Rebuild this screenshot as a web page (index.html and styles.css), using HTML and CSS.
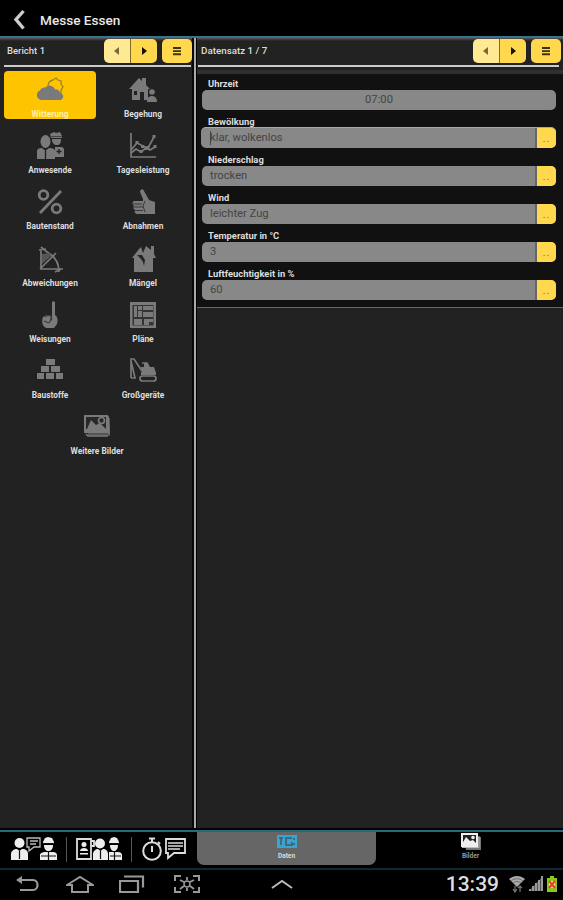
FILE: index.html
```html
<!DOCTYPE html>
<html lang="de">
<head>
    <meta charset="UTF-8">
    <meta name="viewport" content="width=device-width, initial-scale=1.0">
    <title>Messe Essen</title>
    <link rel="stylesheet" href="styles.css">
</head>
<body>
    <header class="topbar">
        <svg class="back" viewBox="0 0 14 22"><path d="M11.500 2 L4 10.500 L11.500 19.500" fill="none" stroke="#ccc" stroke-width="3.400"/></svg>
        <h1>Messe Essen</h1>
    </header>

    <main class="content">
        <!-- Menü links -->
        <section class="sidebar">
            <div class="panel-head">
                <span class="head-title report">Bericht 1</span>
                <div class="pager">
                    <button class="prev"><svg viewBox="0 0 8 10"><path d="M6 1v8L1 5z"/></svg></button>
                    <button class="next"><svg viewBox="0 0 8 10"><path d="M2 1v8l5-4z"/></svg></button>
                </div>
                <button class="menu"><svg viewBox="0 0 10 10"><path d="M1 1h8v2H1zM1 4.200h8v1.800H1zM1 7.200h8v2H1z"/></svg></button>
            </div>
            <nav class="tiles">
                <a class="tile active">
                    <svg viewBox="0 0 28 28"><path d="M12 10a6.500 6.500 0 0 1 5-6l3-2 2 2 3 1 0 3 2 3-2 3v3" fill="none" stroke="#9c8226" stroke-width="1.300"/><path class="f" d="M5 24a5 5 0 0 1-1-9.500 5 5 0 0 1 5-3 6 6 0 0 1 10 2 4 4 0 0 1 5 3 4 4 0 0 1 1 7.500z"/></svg>
                    <span>Witterung</span>
                </a>
                <a class="tile">
                    <svg viewBox="0 0 28 28"><path class="f" fill-rule="evenodd" d="M0 13 10 2l3 3V2h4v7l4 4h-2v11h-4v-8h-4v8H3V13zM5 15v4h3v-4z"/><circle class="f" cx="23" cy="16" r="2.800"/><path class="f" d="M18 26c0-4 2-6 5-6s5 2 5 6z"/></svg>
                    <span>Begehung</span>
                </a>
                <a class="tile">
                    <svg viewBox="0 0 28 28"><path class="f" d="M14 2l4-2 2 1 4-1 2 4v2H15zM16 7h9c0 4-1 6-4 6s-5-2-5-6M19 15h6c2 0 3 1 3 3v7h-9z"/><ellipse class="f" cx="9.500" cy="9.500" rx="5" ry="6.500"/><path class="f" d="M1 27v-8c0-2 2-3 5-3l3.500 3 3.500-3c4 0 6 1 6 3v8z"/><path d="M9.500 19v8M23 17v5M20.500 19.500h5" stroke="#202020" stroke-width="1.300"/><path d="M15 4.500h11" stroke="#444"/></svg>
                    <span>Anwesende</span>
                </a>
                <a class="tile">
                    <svg viewBox="0 0 28 28"><path class="s" d="M2 1v24h25M2 18l6-7 6 3 5 2 6-11M2 21l5-4 5 3 5-4 4 2 5-3"/><path class="f" d="M6.500 9h3v3h-3zM12 13h3v3h-3zM17.500 14h3v3h-3zM23.500 3h3v3h-3zM10.500 18h3v3h-3zM15.500 15h3v3h-3zM24.500 13h3v3h-3z"/></svg>
                    <span>Tagesleistung</span>
                </a>
                <a class="tile">
                    <svg viewBox="0 0 28 28"><path class="s thick" d="M4 25 25 3"/><circle class="s thick" cx="7.500" cy="7" r="4.300"/><circle class="s thick" cx="20.500" cy="20.500" r="4.300"/></svg>
                    <span>Bautenstand</span>
                </a>
                <a class="tile">
                    <svg viewBox="0 0 28 28"><path class="f" d="M14 11 11 4c0-3 3-4 4-1l5 9 6 2v12H9c-3 0-4-2-3-4-2-1-2-3-1-4-2-2-2-5 1-5h8z"/><path d="M4 16h9M5 19h9M6 22.500h8M16 13l-2 5 2 6" stroke="#282828" stroke-width=".8" fill="none"/></svg>
                    <span>Abnahmen</span>
                </a>
                <a class="tile">
                    <svg viewBox="0 0 28 28"><path class="s" d="M5 5v19h22M4 24 20 8M5 2l6 5c8 4 12 10 12 20M3 5l7-1M19 27l6-3"/><path d="M6 9l8-1 1 3-9 8z" fill="#555"/></svg>
                    <span>Abweichungen</span>
                </a>
                <a class="tile">
                    <svg viewBox="0 0 28 28"><path class="f" d="M3 13 10 4l2-2 2 6 3-7 5 4V1h3v8l2 4h-3v14H5V13z"/><path d="M8 10l4 4 2 3 1 4 1-6-3-5" fill="#242424"/></svg>
                    <span>Mängel</span>
                </a>
                <a class="tile">
                    <svg viewBox="0 0 28 28"><path class="f" d="M16 1c1-1 3-1 3 1v12c3 2 3 6 2 9l-3 4h-8c-5-3-4-8-3-11l4-2 5 1z"/><path d="M9 16l4-2 3 4-3 4-5-2M16 15l-2 5" stroke="#333" stroke-width="1" fill="none"/></svg>
                    <span>Weisungen</span>
                </a>
                <a class="tile">
                    <svg viewBox="0 0 28 28"><path class="f" d="M1 1h26v26H1z"/><path d="M3.500 4h21v20.500h-21z" fill="#333"/><path class="f" d="M5 5h3v11H5zM9 5h4v4H9zM9 10h4v6H9zM14 5h10v4H14zM14 11h10v5H14zM5 18h8v6H5zM15 18h9v3h-4v3h-5z"/></svg>
                    <span>Pläne</span>
                </a>
                <a class="tile">
                    <svg viewBox="0 0 28 28"><path class="f" d="M10 2h9v6h-9zM5 9h8v6H5zM15 9h9v6h-9zM1 16h7v6H1zM10 16h8v6h-8zM20 16h7v6h-7z"/></svg>
                    <span>Baustoffe</span>
                </a>
                <a class="tile">
                    <svg viewBox="0 0 28 28"><path class="s" d="M2 21V2h3l8 12M2 4l4 17H2M13 6h5l3 6"/><path class="f" d="M12 10h3V6h4v4h6l2 6H13z"/><rect class="s" x="11" y="19" width="16" height="5" rx="2.500"/><path class="f" d="M12 15h15v3H12z"/></svg>
                    <span>Großgeräte</span>
                </a>
                <a class="tile wide">
                    <svg viewBox="0 0 28 28"><path d="M5 5h22v18H5z" fill="#555"/><path class="f" d="M1 2h24v18H1z"/><path d="M3 4h20v12H3z" fill="#282828"/><path class="f" d="M4 16l4-9 5 5 4-2 6 6z"/><circle class="s" cx="18.500" cy="7.500" r="3"/><path class="s" d="M3 21l2 2h20M25 3l1 18"/></svg>
                    <span>Weitere Bilder</span>
                </a>
            </nav>
        </section>

        <!-- Datensatz rechts -->
        <section class="detail">
            <div class="panel-head">
                <span class="head-title">Datensatz 1 / 7</span>
                <div class="pager">
                    <button class="prev"><svg viewBox="0 0 8 10"><path d="M6 1v8L1 5z"/></svg></button>
                    <button class="next"><svg viewBox="0 0 8 10"><path d="M2 1v8l5-4z"/></svg></button>
                </div>
                <button class="menu"><svg viewBox="0 0 10 10"><path d="M1 1h8v2H1zM1 4.200h8v1.800H1zM1 7.200h8v2H1z"/></svg></button>
            </div>
            <form class="form">
                <div class="row">
                    <label>Uhrzeit</label>
                    <div class="field"><div class="value center">07:00</div></div>
                </div>
                <div class="row">
                    <label>Bewölkung</label>
                    <div class="field focus"><div class="value">klar, wolkenlos</div><div class="more">..</div></div>
                </div>
                <div class="row">
                    <label>Niederschlag</label>
                    <div class="field"><div class="value">trocken</div><div class="more">..</div></div>
                </div>
                <div class="row">
                    <label>Wind</label>
                    <div class="field"><div class="value">leichter Zug</div><div class="more">..</div></div>
                </div>
                <div class="row">
                    <label>Temperatur in °C</label>
                    <div class="field"><div class="value">3</div><div class="more">..</div></div>
                </div>
                <div class="row">
                    <label>Luftfeuchtigkeit in %</label>
                    <div class="field"><div class="value">60</div><div class="more">..</div></div>
                </div>
            </form>
        </section>
    </main>

    <footer class="tabs">
        <div class="actions">
            <svg class="a1" viewBox="0 0 46 24"><g fill="#eee"><circle cx="8.500" cy="6" r="5"/><path d="M0 23v-6c0-3 3-5 6-5l2.500 2 2.500-2c4 0 6 2 6 5v6z"/><path d="M32 5l2-4 3-1 4 1 2 4v2H32zM33 8h9c0 4-2 6-4.500 6S33 12 33 8M29 23v-5c0-2 3-3 5-3h8c2 0 4 1 4 3v5z"/></g><path d="M16 1h13v9h-6l-5 4v-4h-2zM19 4h8M19 7h6" fill="none" stroke="#bbb" stroke-width="1.300"/><path d="M8.500 14v8M37.500 15v8M30 19h15M32 6.500h11" stroke="#111" stroke-width="1.200"/></svg>
            <i></i>
            <svg class="a2" viewBox="0 0 46 24"><path d="M1 2h14v20H1zM15 4h3v5h-3" fill="none" stroke="#ddd" stroke-width="1.800"/><g fill="#eee"><circle cx="8" cy="7.500" r="2.500"/><path d="M4 14c0-4 8-4 8 0zM4 16h8v1.500H4z"/><circle cx="24" cy="6.500" r="5"/><path d="M17 23v-6c0-3 3-5 5-5l2.500 2 2.500-2c3 0 5 2 5 5v6zM33 5l2-4 3-1 3 1 2 4v2H33zM34 8h8c0 4-2 6-4 6s-4-2-4-6M33 23v-8h9c2 0 4 1 4 3v5z"/></g><path d="M24.500 14v8M38.500 15v8M34 19h11M33 6.500h10" stroke="#111" stroke-width="1.200"/></svg>
            <i></i>
            <svg class="a3" viewBox="0 0 44 24"><g fill="none" stroke="#ddd"><circle cx="10" cy="14" r="8.800" stroke-width="2"/><path d="M7 1.500h6M10 2v4M16 5l2 2M10 15V9" stroke-width="2"/><path d="M24 2h19v14H32l-6 5v-5h-2z" stroke-width="1.800"/><path d="M26 6h15M26 9h15M26 12h12" stroke-width="1.500"/></g></svg>
        </div>
        <div class="tab selected">
            <svg viewBox="0 0 20 13"><path d="M0 0h20v13H0z" fill="#38a5d0"/><path d="M2 3h4M4 3v7M15 3H9v7h6V7M17 3v2M17 8v2" fill="none" stroke="#456" stroke-width="1.500"/></svg>
            <span>Daten</span>
        </div>
        <div class="tab">
            <svg class="pics" viewBox="0 0 20 18"><path d="M3 4h17v13H5z" fill="#777"/><path d="M0 0h17v14H0z" fill="#eee"/><path d="M2 2h13v8H2z" fill="#222"/><path d="M1 11l4-7 4 4 3-1 4 4z" fill="#eee"/><circle cx="12" cy="4.500" r="1.800" fill="#eee"/><path d="M1 14.500h17V3" fill="none" stroke="#bbb"/></svg>
            <span>Bilder</span>
        </div>
    </footer>

    <div class="sysbar">
        <svg class="nav-back" viewBox="0 0 24 18"><path d="M2 5h15c6 0 6 10 0 10H4" fill="none" stroke="#999" stroke-width="2.200"/><path d="M0 5l6-4v8z" fill="#999"/></svg>
        <svg class="nav-home" viewBox="0 0 28 18"><path d="M1 10 14 2l13 8h-5v7H6v-7z" fill="none" stroke="#999" stroke-width="2"/></svg>
        <svg class="nav-recent" viewBox="0 0 26 18"><path d="M1 6h18v11H1zM5 1.500h19v11" fill="none" stroke="#999" stroke-width="2.200"/></svg>
        <svg class="nav-shot" viewBox="0 0 26 18"><path d="M1 6V1h6M19 1h6v5M25 12v5h-6M7 17H1v-5" fill="none" stroke="#999" stroke-width="2"/><path d="M6 5l4 2M20 5l-4 2M6 14l4-3M20 14l-4-3M13 2v3M13 13v3" stroke="#999" stroke-width="1.800"/><circle cx="13" cy="9" r="3" fill="none" stroke="#999" stroke-width="1.500"/></svg>
        <svg class="nav-up" viewBox="0 0 22 10"><path d="M1 9 11 2l10 7" fill="none" stroke="#bbb" stroke-width="2"/></svg>
        <span class="clock">13:39</span>
        <svg class="wifi" viewBox="0 0 16 18"><path d="M0 4c5-4 11-4 16 0l-8 8z" fill="#aaa"/><path d="M2 6c4-3 8-3 12 0M4 8c3-2 5-2 8 0" fill="none" stroke="#555" stroke-width=".7"/><path d="M6 11v6M4 14l2 3 2-3M11 17v-6M9 13l2-2 2 2" fill="none" stroke="#777" stroke-width="1.200"/></svg>
        <svg class="signal" viewBox="0 0 14 16"><path d="M0 15 14 0v15z" fill="#555"/><path d="M0 15v-2h2v2zM3 15v-5h2v5zM6 15V7h2v8zM9 15V4h2v11zM12 15V0h2v15z" fill="#999"/></svg>
        <svg class="battery" viewBox="0 0 10 16"><path d="M3 0h4v2h3v14H0V2h3z" fill="#8cc621"/><path d="M2 5h6v7H2z" fill="#ffd9a0"/><path d="M2 5l6 7M8 5l-6 7" stroke="#e5401c" stroke-width="2"/></svg>
    </div>
</body>
</html>
```
FILE: styles.css
```css
* {
    box-sizing: border-box;
}
body {
    margin: 0;
    height: 900px;
    background-color: #000;
    color: #fff;
    font-family: Roboto, sans-serif;
    display: flex;
    flex-direction: column;
    overflow: hidden;
}
svg {
    display: block;
    flex: none;
}
.topbar {
    height: 38px;
    flex: none;
    display: flex;
    align-items: center;
    border-bottom: 2px solid #38728b;
    padding: 3px 0 0 12px;
}
.back {
    width: 14px;
    height: 22px;
}
h1 {
    margin: 1px 0 0 14px;
    font-size: 13.6px;
    font-weight: 500;
    color: #e8e8e8;
}
.content {
    height: 790px;
    flex: none;
    display: flex;
    background: linear-gradient(#555, #222 3px);
}
.sidebar {
    width: 196px;
    padding-right: 3px;
    border-right: 2px solid #aaa;
    box-shadow: inset -2px 0 #080808;
}
.detail {
    flex: 1;
    border-left: 1px solid #000;
}

/* Kopfzeile mit Blättern und Menü */
.panel-head {
    height: 29px;
    padding: 1px 0 3px 3px;
    display: flex;
    align-items: center;
    border-bottom: 2px solid #ccc;
}
.sidebar .panel-head {
    margin: 0 0 0 4px;
}
.detail .panel-head {
    margin: 0 4px 0 1px;
}
.head-title {
    flex: 1;
    font-size: 9.8px;
    font-weight: 500;
    color: #ddd;
}
.report {
    font-size: 9.5px;
}
.pager {
    display: flex;
    margin-right: 5px;
}
.menu {
    margin-right: -1px;
}
.detail .menu {
    margin-right: -2px;
}
button {
    border: 0;
    padding: 0;
    height: 24px;
    background-color: #ffd84e;
    display: flex;
    align-items: center;
    justify-content: center;
}
button svg {
    width: 8px;
    height: 10px;
    fill: #181000;
}
.prev {
    width: 27px;
    border-radius: 5px 0 0 5px;
    border-right: 1px solid #806c27;
    background-color: #ffe992;
}
.prev svg {
    fill: #78693b;
}
.next {
    width: 26px;
    border-radius: 0 5px 5px 0;
}
.menu {
    width: 30px;
    border-radius: 5px;
}
.menu svg {
    width: 10px;
    fill: #40350c;
}

/* Kacheln */
.tiles {
    display: grid;
    grid-template-columns: 92px 94px;
    grid-auto-rows: 56.2px;
    padding: 4px 0 0 4px;
}
.tile {
    height: 48px;
    padding-top: 5px;
    display: flex;
    flex-direction: column;
    align-items: center;
    border-radius: 4px;
}
.tile.active {
    background-color: #ffc400;
}
.tile svg {
    width: 28px;
    height: 28px;
}
.tile span {
    margin-top: 5px;
    font-size: 8.4px;
    line-height: 10px;
    font-weight: 700;
    color: #ddd;
    white-space: nowrap;
}
.tile.active span {
    color: #fff0a8;
}
.wide {
    grid-column: 1 / 3;
}
.f {
    fill: #7a7a7a;
}
.s {
    fill: none;
    stroke: #7a7a7a;
    stroke-width: 1.7;
}
.thick {
    stroke-width: 2.8;
}

/* Formular */
.form {
    margin-top: 3px;
    padding: 4px 7px 0 5px;
    height: 238px;
    background-color: #111;
    border-top: 4px solid #303030;
    border-bottom: 1px solid #666;
}
.row {
    height: 38px;
}
label {
    display: block;
    height: 12px;
    padding-left: 6px;
    font-size: 9.4px;
    line-height: 11px;
    font-weight: 700;
    color: #ddd;
}
.field {
    display: flex;
    height: 20px;
    border-radius: 5px;
    overflow: hidden;
    background-color: #888;
    color: #444;
}
.focus {
    height: 21px;
    margin-top: -1px;
    margin-left: -1px;
    border-top: 1px solid #aaa;
}
.value {
    flex: 1;
    padding-left: 8px;
    font-size: 11.2px;
    line-height: 20px;
}
.focus .value {
    padding-left: 0;
    margin-left: 9px;
    background: linear-gradient(#444, #444) 0 3px / 1px 14px no-repeat;
}
.center {
    padding: 0;
    text-align: center;
}
.more {
    width: 21px;
    background-color: #ffd84e;
    border-left: 2px solid #666;
    color: #86691a;
    font-size: 10px;
    line-height: 21px;
    text-align: center;
    letter-spacing: 1px;
}

/* Untere Leiste */
.tabs {
    height: 40px;
    flex: none;
    margin-top: 2px;
    display: flex;
    border-top: 2px solid #29697f;
    border-bottom: 2px solid #0c2931;
}
.actions {
    width: 197px;
    display: flex;
    align-items: center;
    padding: 0 0 2px 11px;
}
.actions i {
    width: 1px;
    height: 25px;
    margin: 0 9px;
    background-color: #555;
}
.a1, .a2 {
    width: 46px;
    height: 24px;
}
.a3 {
    width: 44px;
    height: 24px;
    margin-left: 1px;
}
.tab {
    flex: 1;
    display: flex;
    flex-direction: column;
    align-items: center;
    padding: 1px 0 0 2px;
}
.selected {
    flex: none;
    width: 179px;
    height: 33px;
    padding: 3px 0 0;
    border-radius: 0 0 7px 7px;
    background-color: #666;
}
.tab svg {
    width: 20px;
    height: 13px;
}
.tab .pics {
    height: 18px;
}
.tab span {
    font-size: 6.5px;
    line-height: 8px;
    font-weight: 700;
    margin-top: 4px;
    color: #ddd;
}
.tab .pics + span {
    margin-top: 1px;
    color: #999;
}

/* Systemleiste */
.sysbar {
    flex: 1;
    display: flex;
    align-items: center;
    padding: 0 6px 2px 16px;
}
.nav-back {
    width: 24px;
    height: 18px;
}
.nav-home {
    width: 28px;
    height: 18px;
    margin-left: 26px;
}
.nav-recent {
    width: 26px;
    height: 18px;
    margin-left: 25px;
}
.nav-shot {
    width: 26px;
    height: 18px;
    margin-left: 29px;
}
.nav-up {
    width: 22px;
    height: 10px;
    margin-left: 71px;
}
.clock {
    flex: 1;
    text-align: right;
    font-size: 21px;
    font-weight: 500;
    line-height: 24px;
    color: #ddd;
}
.wifi {
    width: 16px;
    height: 18px;
    margin-left: 10px;
}
.signal {
    width: 14px;
    height: 16px;
    margin-left: 4px;
}
.battery {
    width: 10px;
    height: 16px;
    margin-left: 4px;
}
```
